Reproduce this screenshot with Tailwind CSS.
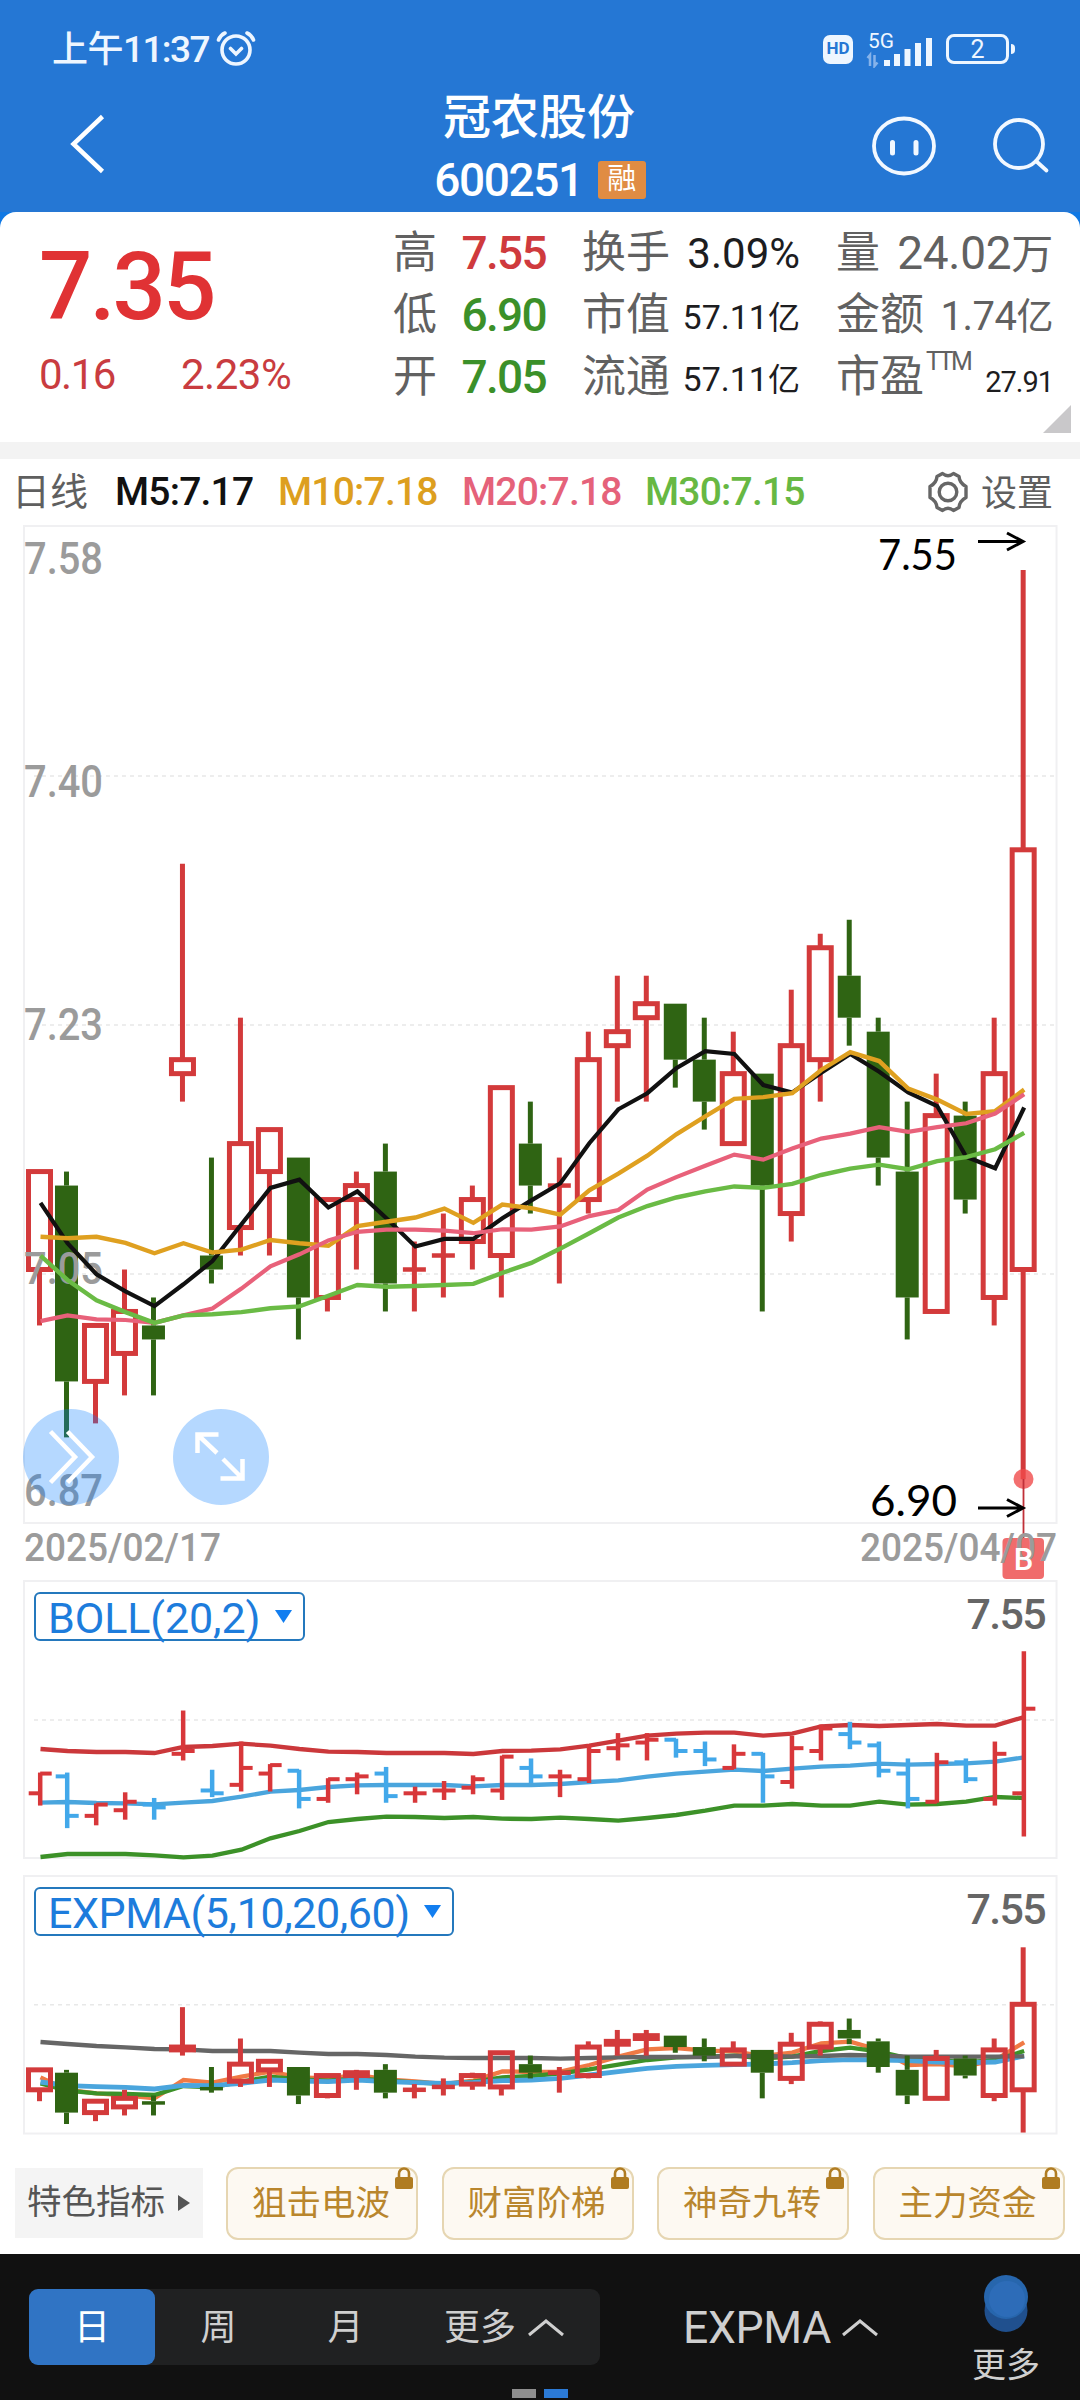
<!DOCTYPE html>
<html lang="zh-CN">
<head>
<meta charset="utf-8">
<title>冠农股份 600251</title>
<script src="https://cdn.jsdelivr.net/npm/@tailwindcss/browser@4"></script>
</head>
<body class="w-[1080px] h-[2400px] overflow-hidden bg-white font-['Roboto','Noto_Sans_CJK_SC',sans-serif]">

<!-- header -->
<div class="bg-[#2577d4]">
  <div class="h-[84px] pt-[14px] pl-[52px] pr-[65px] flex items-center justify-between text-[#eef6ff]">
    <div class="flex items-center gap-[7px]">
      <span class="text-[36px] leading-none whitespace-nowrap tracking-[-0.500px] font-medium">上午<span class="text-[37px] tracking-[-1.600px]">11:37</span></span>
      <svg class="w-10 h-9" viewBox="0 0 40 36" fill="none" stroke="#eef6ff" stroke-width="3.600" stroke-linecap="round"><circle cx="20" cy="19" r="14"/><path d="M14.500 17.500l5.500 5.500 5.500-5.500M2.500 9Q4.500 4 9 2M37.500 9Q35.500 4 31 2"/></svg>
    </div>
    <div class="flex items-center">
      <span class="w-[30px] h-[29px] rounded-[7px] bg-[#eef6ff] text-[#2577d4] text-[17px] font-bold flex items-center justify-center">HD</span>
      <svg class="w-[70px] h-[44px] ml-3 mr-[11px] mb-[6px]" viewBox="865 22 70 44">
        <text x="868" y="46" font-size="20" textLength="26" lengthAdjust="spacingAndGlyphs" fill="#eef6ff">5G</text>
        <g fill="#eef6ff"><rect x="884" y="58" width="6" height="6"/><rect x="894" y="52" width="6" height="12"/><rect x="904.500" y="47" width="6" height="17"/><rect x="915" y="41" width="6" height="23"/><rect x="926" y="36" width="6" height="28"/></g>
        <path d="M867 56l2.500-3v11M874 53v11l3-3.500" transform="translate(.5 0)" stroke="#86b3ea" stroke-width="2.500" fill="none"/>
      </svg>
      <div class="w-[63px] h-[30px] border-[3px] border-[#eef6ff] rounded-[8px] flex items-center justify-center text-[25px] leading-none">2</div>
      <span class="w-[4px] h-[10px] ml-[2px] rounded-r bg-[#eef6ff]"></span>
    </div>
  </div>
  <div class="h-[128px] flex justify-between">
    <svg class="w-[280px] h-[128px]" viewBox="0 84 280 128" fill="none" stroke="#fff" stroke-width="4.500"><path d="M102.500 116.500L73.500 144l29 27.500"/></svg>
    <div class="w-[300px] flex flex-col items-center text-white">
      <div class="text-[48px] leading-[48px] mt-[10px] mr-[2px] font-medium">冠农股份</div>
      <div class="flex items-center gap-[15px] mt-[15px] h-[46px]">
        <span class="text-[46px] leading-none tracking-[-1.400px] font-medium">600251</span>
        <span class="w-[48px] h-[38px] rounded-[3px] bg-[#e08c43] text-[29px] flex items-center justify-center">融</span>
      </div>
    </div>
    <svg class="w-[280px] h-[128px]" viewBox="800 84 280 128" fill="none" stroke="#f2f8ff" stroke-width="3.800" stroke-linecap="round"><ellipse cx="904" cy="146" rx="30" ry="27.500"/><path d="M892.500 142.500v10.500M916 142.500v10.500" stroke-width="5"/><circle cx="1019" cy="144" r="24"/><path d="M1036 161l10.500 9.500"/></svg>
  </div>
</div>

<!-- quote -->
<div class="bg-[#0f78e4]"><div class="relative h-[230px] bg-white rounded-t-[16px] flex pt-[10px]">
  <div class="w-[393px] pl-[39px] text-[#e03234]">
    <div class="text-[94px] leading-[94px] mt-[18px] font-medium tracking-[-3px]">7.35</div>
    <div class="flex mt-[8px] text-[42px] leading-[66px] text-[#c93c40]"><span class="w-[142px] tracking-[-1.500px]">0.16</span><span class="tracking-[-0.500px]">2.23%</span></div>
  </div>
  <div class="w-[153px] text-[44px] text-[#616161]">
    <div class="h-[62px] flex items-center justify-between">高<span class="text-[46px] font-medium tracking-[-1.700px] text-[#cf3a3d]">7.55</span></div>
    <div class="h-[62px] flex items-center justify-between">低<span class="text-[46px] font-medium tracking-[-1.700px] text-[#3b9029]">6.90</span></div>
    <div class="h-[62px] flex items-center justify-between">开<span class="text-[46px] font-medium tracking-[-1.700px] text-[#3b9029]">7.05</span></div>
  </div>
  <div class="w-[218px] ml-[36px] text-[44px] text-[#616161]">
    <div class="h-[62px] flex items-center justify-between">换手<span class="text-[42px] text-[#1d1d1f]">3.09%</span></div>
    <div class="h-[62px] flex items-center justify-between">市值<span class="text-[34px] pt-1 text-[#1d1d1f] whitespace-nowrap">57.11<span class="text-[32px]">亿</span></span></div>
    <div class="h-[62px] flex items-center justify-between">流通<span class="text-[34px] pt-1 text-[#1d1d1f] whitespace-nowrap">57.11<span class="text-[32px]">亿</span></span></div>
  </div>
  <div class="w-[217px] ml-[36px] text-[44px] text-[#616161]">
    <div class="h-[62px] flex items-center justify-between">量<span class="text-[46px] whitespace-nowrap tracking-[-0.300px]">24.02<span class="text-[42px]">万</span></span></div>
    <div class="h-[62px] flex items-center justify-between">金额<span class="text-[40px] whitespace-nowrap pt-1 tracking-[-0.500px]">1.74<span class="text-[37px]">亿</span></span></div>
    <div class="h-[62px] flex items-center">市盈<span class="text-[25px] self-start pt-[2px] ml-[2px] leading-[28px] tracking-[-2.500px]">TTM</span><span class="ml-auto text-[29px] pt-3 text-[#1d1d1f] tracking-[-1px]">27.91</span></div>
  </div>
  <svg class="absolute right-[9px] top-[193px] w-7 h-7" viewBox="0 0 28 28"><path d="M28 0v28H0z" fill="#c9c8ca"/></svg>
</div></div>
<div class="h-[17px] bg-[#f3f3f3]"></div>

<!-- moving averages -->
<div class="h-[66px] pl-[12px] pr-[27px] flex items-center text-[39px] font-medium whitespace-nowrap tracking-[-0.800px]">
  <span class="text-[38px] font-normal text-[#5f5f5f] w-[103px] tracking-normal">日线</span>
  <span class="w-[163px] text-[#111]">M5:7.17</span>
  <span class="w-[184px] text-[#dd9f1f]">M10:7.18</span>
  <span class="w-[183px] text-[#e5627a]">M20:7.18</span>
  <span class="text-[#67b843]">M30:7.15</span>
  <svg class="ml-auto w-[44px] h-[44px] mr-[11px]" viewBox="0 0 44 44" fill="none" stroke="#666" stroke-width="3.400" stroke-linejoin="round"><path d="M16.500 3.500Q22 8 27.500 3.500L33 6.500Q33.500 13 40 16.500V27.500Q33.500 31 33 37.500L27.500 40.500Q22 36 16.500 40.500L11 37.500Q10.500 31 4 27.500V16.500Q10.500 13 11 6.500Z"/><circle cx="22" cy="22" r="8.800"/></svg>
  <span class="text-[36px] font-normal text-[#5f5f5f] tracking-normal pt-[3px]">设置</span>
</div>

<!-- daily candles -->
<div class="relative h-[1055px]">
  <svg id="kline" class="block w-[1080px] h-[1055px]" viewBox="0 525 1080 1055"></svg>
  <div class="absolute left-[23px] top-[884px] flex gap-[54px]">
    <svg class="w-24 h-24" viewBox="23 1409 96 96" fill="none" stroke="#fff" stroke-width="4.500"><circle cx="71" cy="1457" r="48" fill="#0a7dff" fill-opacity=".3" stroke="none"/><path d="M50.500 1431.500L75 1457l-24.500 25.500M67.500 1431.500L92 1457l-24.500 25.500"/></svg>
    <svg class="w-24 h-24" viewBox="173 1409 96 96" fill="none" stroke="#fff" stroke-width="4.500"><circle cx="221" cy="1457" r="48" fill="#0a7dff" fill-opacity=".3" stroke="none"/><path d="M218.500 1434.500H197.500V1453M198 1435l19 18M220.500 1478.500H242.500V1459M242 1478l-19-19"/></svg>
  </div>
</div>

<!-- BOLL -->
<div class="relative h-[295px]">
  <svg id="boll" class="absolute inset-0 w-[1080px] h-[295px]" viewBox="0 1580 1080 295"></svg>
  <div class="relative flex justify-between items-start pt-[12px] pl-[34px] pr-[35px] text-[43px] leading-[44px]">
    <div class="w-[271px] h-[49px] border-2 border-[#2478bd] rounded-[6px] flex items-center justify-between pl-[12px] pr-[11px] text-[#1d7cdc]"><span class="pt-[2px] tracking-[-0.100px]">BOLL(20,2)</span><svg class="w-[17px] h-[13px]" viewBox="0 0 17 13"><path d="M0 0h17L8.500 13z" fill="#127ef0"/></svg></div>
    <span class="text-[#666] font-medium tracking-[-1.700px]">7.55</span>
  </div>
</div>

<!-- EXPMA -->
<div class="relative h-[292px]">
  <svg id="expma" class="absolute inset-0 w-[1080px] h-[292px]" viewBox="0 1875 1080 292"></svg>
  <div class="relative flex justify-between items-start pt-[12px] pl-[34px] pr-[35px] text-[43px] leading-[44px]">
    <div class="w-[420px] h-[49px] border-2 border-[#2478bd] rounded-[6px] flex items-center justify-between pl-[12px] pr-[11px] text-[#1d7cdc]"><span class="pt-[2px] tracking-[-0.400px]">EXPMA(5,10,20,60)</span><svg class="w-[17px] h-[13px]" viewBox="0 0 17 13"><path d="M0 0h17L8.500 13z" fill="#127ef0"/></svg></div>
    <span class="text-[#666] font-medium tracking-[-1.700px]">7.55</span>
  </div>
</div>

<!-- indicator chips -->
<div class="h-[87px] pl-[15px] flex items-start text-[34.500px]">
  <div class="w-[188px] h-[70px] mt-[1px] bg-[#f4f4f4] flex items-center justify-between pl-[12px] pr-[13px] text-[#555]">特色指标<svg class="w-3 h-4" viewBox="0 0 12 16"><path d="M0 0l12 8-12 8z" fill="#555"/></svg></div>
  <div id="chips" class="flex gap-[23.500px] ml-[23px] text-[#b9862d]"></div>
</div>

<!-- bottom bar -->
<div class="relative h-[146px] bg-[#111] flex text-[36px] text-[#cfcfcf]">
  <div class="ml-[29px] mt-[35px] w-[571px] h-[76px] rounded-[9px] bg-[#202122] flex items-center">
    <span class="w-[126px] h-[76px] pt-[2px] rounded-[9px] bg-[#3074c4] text-white flex items-center justify-center">日</span>
    <span class="w-[127px] text-center pt-[2px]">周</span>
    <span class="w-[127px] text-center pt-[2px]">月</span>
    <span class="ml-[35px] pt-[2px]">更多</span>
    <svg class="w-9 h-[18px] ml-3 mt-[2px]" viewBox="0 0 36 18" fill="none" stroke="#cfcfcf" stroke-width="3"><path d="M1 16L18 2l17 14"/></svg>
  </div>
  <div class="ml-[83px] mt-[36px] h-[76px] flex items-center"><span class="text-[44.500px] tracking-[-0.300px]">EXPMA</span>
    <svg class="w-9 h-[18px] ml-[11px]" viewBox="0 0 36 18" fill="none" stroke="#cfcfcf" stroke-width="3"><path d="M1 16L18 2l17 14"/></svg></div>
  <div class="ml-auto mr-[40px] mt-[20px] flex flex-col items-center text-[34px]">
    <svg class="w-12 h-[60px]" viewBox="0 0 48 60"><circle cx="24" cy="36.500" r="21.500" fill="#20508e"/><circle cx="24" cy="23" r="22" fill="#2766ad"/><circle cx="25" cy="25" r="18" fill="#2d6cb8"/></svg>
    <span class="leading-[40px] mt-[11px]">更多</span>
  </div>
  <div class="absolute left-[512px] bottom-[2px] flex gap-2"><span class="w-6 h-[9px] bg-[#8e8e8e]"></span><span class="w-6 h-[9px] bg-[#2b7ad6]"></span></div>
</div>

<script>
// open, high, low, close
const bars = [[7.05,7.12,7.01,7.12],[7.11,7.12,6.93,6.97],[6.97,7.01,6.94,7.01],[6.99,7.05,6.96,7.02],[7.01,7.03,6.96,7.00],[7.19,7.34,7.17,7.20],[7.06,7.13,7.04,7.05],[7.08,7.23,7.06,7.14],[7.12,7.15,7.06,7.15],[7.13,7.13,7.00,7.03],[7.03,7.10,7.02,7.10],[7.10,7.12,7.05,7.11],[7.12,7.14,7.02,7.04],[7.05,7.07,7.02,7.05],[7.06,7.09,7.03,7.06],[7.07,7.11,7.05,7.10],[7.06,7.18,7.03,7.18],[7.14,7.17,7.09,7.11],[7.11,7.13,7.04,7.11],[7.10,7.22,7.09,7.20],[7.21,7.26,7.17,7.22],[7.23,7.26,7.17,7.24],[7.24,7.24,7.18,7.20],[7.20,7.23,7.15,7.17],[7.14,7.22,7.14,7.19],[7.19,7.19,7.02,7.11],[7.09,7.25,7.07,7.21],[7.20,7.29,7.17,7.28],[7.26,7.30,7.21,7.23],[7.22,7.23,7.11,7.13],[7.12,7.17,7.00,7.03],[7.02,7.19,7.02,7.16],[7.16,7.17,7.09,7.10],[7.03,7.23,7.01,7.19],[7.05,7.55,6.90,7.35]];
const RED = '#d33a3b', GREEN = '#2f6413';
const xAt = i => i === 0 ? 39.5 : 66.5 + 28.99 * (i - 1);
const put = (id, s) => document.getElementById(id).innerHTML = s;
const line = (x1, y1, x2, y2, c, w, extra = '') => `<line x1="${x1}" y1="${y1}" x2="${x2}" y2="${y2}" stroke="${c}" stroke-width="${w}" ${extra}/>`;
const text = (x, y, s, size, len, c, extra = '') => `<text x="${x}" y="${y}" font-size="${size}" textLength="${len}" lengthAdjust="spacingAndGlyphs" fill="${c}" ${extra}>${s}</text>`;
const curve = (vals, base, k, c, w) => `<polyline fill="none" stroke="${c}" stroke-width="${w}" points="${vals.map((v, i) => (xAt(i) + 1) + ',' + (base + v / k)).join(' ')}"/>`;
const grid = y => line(34, y, 1056, y, '#e8e8e8', 1.6, 'stroke-dasharray="4 4"');
const frame = (y1, y2) => `<rect x="24" y="${y1}" width="1032.500" height="${y2 - y1}" fill="none" stroke="#f0f0f2" stroke-width="2"/>`;

function candles(top, k) {
  const Y = p => top + (7.55 - p) * k;
  return bars.map(([o, h, l, c], i) => {
    const x = xAt(i), up = c >= o, col = up ? RED : GREEN, a = Y(Math.max(o, c)), b = Y(Math.min(o, c));
    if (o === c) return line(x, Y(h), x, Y(l), col, 5) + line(x - 11.5, a, x + 11.5, a, col, 4.5);
    let s = line(x, Y(h), x, a, col, 5) + line(x, b, x, Y(l), col, 5);
    if (up) return s + `<rect x="${x - 11}" y="${a}" width="22" height="${b - a}" fill="none" stroke="${col}" stroke-width="5"/>`;
    return s + `<rect x="${x - 11.5}" y="${a}" width="23" height="${Math.max(b - a, 3.5)}" fill="${col}"/>`;
  }).join('');
}

const ma5 = [512,625,712,760,801,740,675,572,470,447,525,480,555,634,613,613,555,505,457,345,250,205,135,87,95,182,203,148,95,145,203,241,383,415,245];
const ma10 = [607,611,607,624,653,625,651,643,616,625,632,577,565,553,528,568,517,527,545,477,430,380,320,270,221,216,205,140,90,115,192,223,263,255,195];
const ma20 = [843,827,838,840,848,827,808,752,690,656,617,593,587,587,590,597,586,587,578,549,532,475,440,408,377,391,360,332,318,300,313,300,289,262,208];
const ma30 = [660,728,785,818,848,827,824,818,807,802,772,742,747,745,742,739,708,680,640,597,553,521,497,480,466,470,459,434,416,405,418,395,384,362,316];
const arrow = y => `<path d="M978 ${y}H1023M1007 ${y - 8.5}L1023 ${y}L1007 ${y + 8.5}" fill="none" stroke="#000" stroke-width="3"/>`;
const M = 'font-weight="500"';
put('kline', frame(526, 1523) + grid(776) + grid(1025) + grid(1274) + candles(570, 1399)
  + text(24, 574, '7.58', 43.5, 79, '#9b9b9b', M) + text(24, 797, '7.40', 43.5, 79, '#9b9b9b', M) + text(24, 1040, '7.23', 43.5, 79, '#9b9b9b', M)
  + text(24, 1283.5, '7.05', 43.5, 79, '#9b9b9b', M) + text(24, 1506, '6.87', 43.5, 79, '#9b9b9b', M)
  + curve(ma5, 1020, 2.8, '#111', 4.2) + curve(ma10, 1020, 2.8, '#dfa020', 4.4) + curve(ma20, 1020, 2.8, '#e8617a', 4.2) + curve(ma30, 1020, 2.8, '#6abb45', 4.4)
  + `<circle cx="1023.500" cy="1479" r="10" fill="#f04b4b" fill-opacity=".8"/>` + line(1023.5, 1479, 1023.5, 1538, '#c03038', 1.8)
  + `<rect x="1002.500" y="1538" width="41.500" height="41" rx="4" fill="#f06c6c"/>`
  + text(24, 1561, '2025/02/17', 39.5, 197, '#9b9b9b', M) + text(860, 1561, '2025/04/07', 39.5, 197, '#9b9b9b', M)
  + `<text x="1023.500" y="1570" font-size="31" text-anchor="middle" fill="#fff" font-weight="500">B</text>`
  + arrow(541.5) + arrow(1508)
  + text(878, 570, '7.55', 43, 79, '#000', 'font-family="Lato"') + text(870, 1516, '6.90', 43, 87, '#000', 'font-family="Lato"'));

const up = [537,543,546,546,549,531,528,521,527,537,545,546,549,549,549,552,543,542,538,527,512,497,491,488,488,497,491,469,465,468,465,462,467,467,441];
const mid = [698,696,699,700,703,698,693,680,665,660,651,646,645,645,645,649,645,645,642,636,631,620,611,605,599,603,596,590,587,581,584,582,580,575,562];
const low = [861,852,852,852,856,862,857,839,805,783,756,747,740,741,744,741,746,747,743,747,752,744,735,722,707,707,702,707,707,695,704,702,695,681,684];
const BY = p => 1652.3 + (7.55 - p) * 282;
put('boll', frame(1581, 1858) + grid(1720)
  + curve(up, 1570, 3, '#cb383b', 4.3) + curve(mid, 1570, 3, '#4aa5dd', 4.3) + curve(low, 1570, 3, '#3c9128', 4.3)
  + bars.map(([o, h, l, c], i) => {
    const x = xAt(i) + 0.7, col = c >= o ? '#d8373a' : '#42a8ea';
    return line(x, BY(h) - 1, x, BY(l) + 1, col, 4.5) + line(x - 11.5, BY(o), x, BY(o), col, 4) + line(x, BY(c), x + 11.5, BY(c), col, 4);
  }).join(''));

const e60 = [546,552,558,562,567,568,573,573,573,578,582,582,585,590,593,594,594,594,596,594,592,591,591,591,588,588,590,588,585,587,590,590,590,590,589];
const e5 = [652,690,700,706,715,660,668,650,635,652,655,645,658,664,672,662,634,636,635,615,590,568,564,572,574,588,578,550,545,570,615,612,619,600,547];
const e10 = [670,692,700,702,705,678,682,665,650,658,662,655,662,667,672,665,652,648,640,628,614,600,592,590,587,595,590,573,563,575,595,600,607,600,573];
const e20 = [666,677,680,682,687,676,677,670,660,663,665,660,665,668,670,667,662,660,655,645,635,625,619,616,614,612,608,602,599,600,602,606,608,606,588];
put('expma', frame(1876, 2133.5) + grid(2004.7)
  + curve(e5, 1860, 3, '#f07a45', 4.3) + curve(e10, 1860, 3, '#3c9128', 4.3) + curve(e20, 1860, 3, '#4aa5dd', 4.8) + curve(e60, 1860, 3, '#666', 4.3)
  + candles(1947.3, 285));

put('chips', ['狙击电波', '财富阶梯', '神奇九转', '主力资金'].map(t =>
  `<div class="relative w-[192px] h-[73px] pr-[2px] rounded-[12px] border-2 border-[#e6d6b2] bg-[#fdf9f2] flex items-center justify-center">${t}<svg class="absolute right-[3px] -top-[2px] w-[18px] h-[22px]" viewBox="0 0 18 22"><rect y="10" width="18" height="12" rx="2" fill="#b07c22"/><path d="M4 11V6.500a5 5 0 0 1 10 0V11" fill="none" stroke="#b07c22" stroke-width="2.600"/></svg></div>`).join(''));
</script>
</body>
</html>
